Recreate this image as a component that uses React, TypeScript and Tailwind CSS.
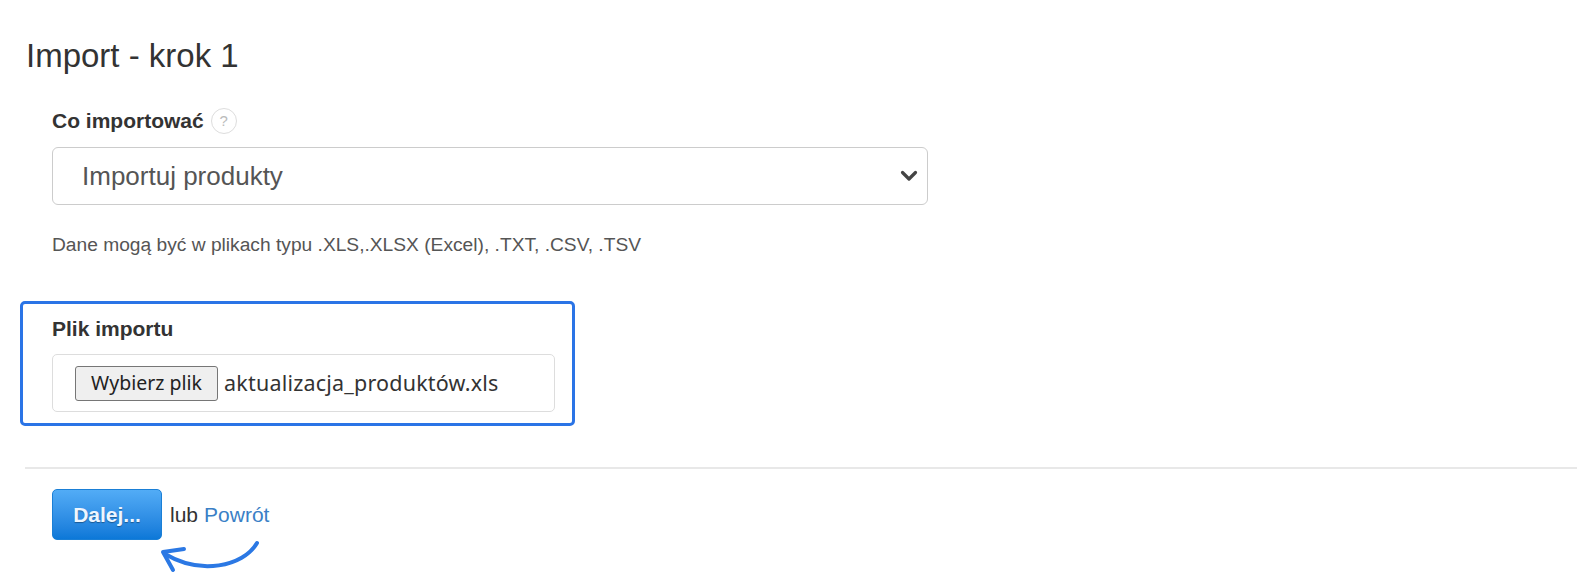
export default function App() {
  return (
    <div className="relative h-[587px] w-full overflow-hidden bg-white font-['Liberation_Sans',Arial,sans-serif] text-[#333]">
      <h1 className="pl-[26px] pt-[38px] text-[33px] leading-[35px] font-normal text-[#333]">Import - krok 1</h1>

      {/* Co importowac */}
      <div className="mt-[35px] pl-[52px]">
        <div className="flex items-center gap-[7px]">
          <label className="text-[21px] leading-[24px] font-bold text-[#333]">Co importować</label>
          <span className="flex h-[26px] w-[26px] items-center justify-center rounded-full border border-[#ddd] text-[15px] text-[#bbb]">
            ?
          </span>
        </div>
        <div className="mt-[13px] flex h-[58px] w-[876px] items-center justify-between rounded-[6px] border border-[#ccc] pl-[29px] pr-[8px]">
          <span className="text-[26px] text-[#555]">Importuj produkty</span>
          <svg width="18" height="12" viewBox="0 0 18 12" className="mr-[1px]">
            <path d="M2.5 2.5 L9 9 L15.5 2.5" fill="none" stroke="#444" strokeWidth="3.2" strokeLinecap="round" strokeLinejoin="round" />
          </svg>
        </div>
        <p className="mt-[28px] text-[19.2px] leading-[24px] text-[#555]">
          Dane mogą być w plikach typu .XLS,.XLSX (Excel), .TXT, .CSV, .TSV
        </p>
      </div>

      {/* Plik importu */}
      <div className="ml-[20px] mt-[44px] w-[555px] rounded-[5px] border-[3px] border-[#2a74e6] pb-[11px] pl-[29px] pt-[13px]">
        <label className="block text-[21px] leading-[24px] font-bold text-[#333]">Plik importu</label>
        <div className="mt-[13px] flex h-[58px] w-[503px] items-center rounded-[5px] border border-[#ddd] pl-[22px] font-['Noto_Sans',sans-serif]">
          <span className="flex h-[35px] w-[143px] items-center justify-center rounded-[3px] border border-[#767676] bg-[#efefef] text-[19.5px] text-[#222]">
            Wybierz plik
          </span>
          <span className="ml-[6px] text-[21.5px] tracking-[0.2px] text-[#333]">aktualizacja_produktów.xls</span>
        </div>
      </div>

      <div className="ml-[25px] mt-[41px] h-[2px] w-[1552px] bg-[#e8e8e8]" />

      {/* Actions */}
      <div className="relative mt-[20px] flex items-center pl-[52px]">
        <button className="h-[51px] w-[110px] rounded-[5px] border border-[#1a7fd6] bg-gradient-to-b from-[#52acf6] to-[#0b78d8] text-[21px] font-bold text-[#eef6ff] [text-shadow:0_1px_1px_rgba(0,0,0,0.35)]">
          Dalej...
        </button>
        <span className="ml-[8px] text-[21px] text-[#333]">lub</span>
        <a className="ml-[6px] text-[21px] text-[#3a7fc6]">Powrót</a>
        <svg width="110" height="45" viewBox="0 0 110 45" className="absolute left-[155px] top-[48px]">
          <path d="M102 6 C 88 30, 45 38, 10 17" fill="none" stroke="#2b78e4" strokeWidth="4" strokeLinecap="round" />
          <path d="M29 12 L8 15 L18 33" fill="none" stroke="#2b78e4" strokeWidth="4" strokeLinecap="round" strokeLinejoin="round" />
        </svg>
      </div>
    </div>
  )
}
